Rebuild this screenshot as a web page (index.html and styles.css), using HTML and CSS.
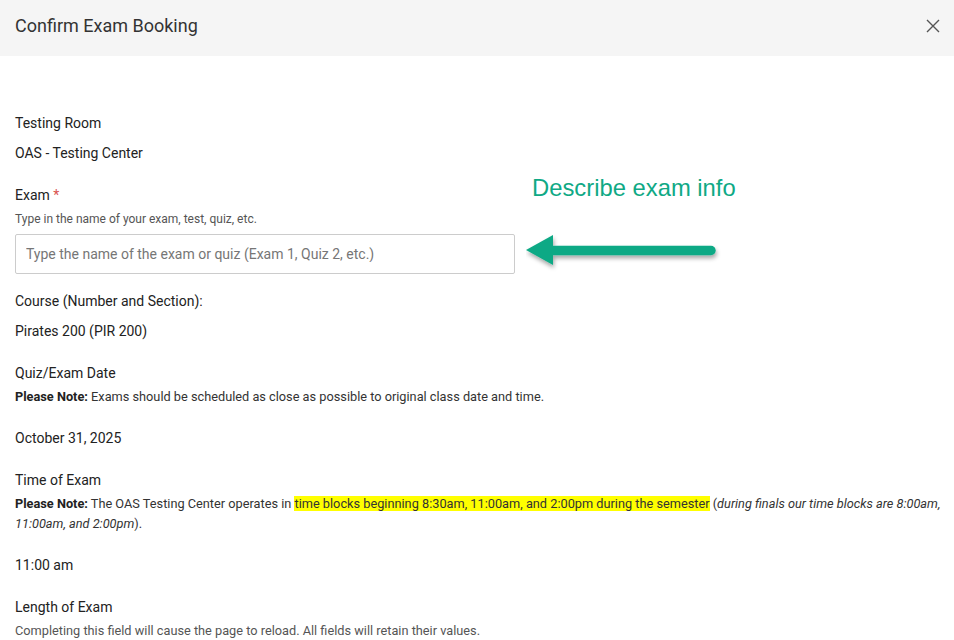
FILE: index.html
```html
<!DOCTYPE html>
<html lang="en">
<head>
    <meta charset="UTF-8">
    <title>Confirm Exam Booking</title>
    <link rel="stylesheet" href="styles.css">
</head>
<body>

    <header class="modal-header">
        <h1>Confirm Exam Booking</h1>
        <button class="close-btn" aria-label="Close">
            <svg width="14" height="14" viewBox="0 0 14 14"><path d="M1 1L13 13M13 1L1 13" stroke="#555" stroke-width="1.4" fill="none"/></svg>
        </button>
    </header>

    <main class="modal-body">
        <!-- 注釈 -->
        <div class="callout">
            <div class="callout-text">Describe exam info</div>
            <svg class="callout-arrow" width="200" height="44" viewBox="0 0 200 44">
                <defs>
                    <filter id="sh" x="-10%" y="-30%" width="130%" height="180%">
                        <feDropShadow dx="1" dy="3" stdDeviation="2" flood-color="#000" flood-opacity="0.35"/>
                    </filter>
                </defs>
                <g filter="url(#sh)">
                    <path d="M26 19.5H185" stroke="#0fa985" stroke-width="9.5" stroke-linecap="round"/>
                    <polygon points="0,19 27,4 27,34" fill="#0fa985"/>
                </g>
            </svg>
        </div>

        <div class="field">
            <div class="label">Testing Room</div>
            <div class="value">OAS - Testing Center</div>
        </div>

        <div class="field field-exam">
            <div class="label">Exam <span class="req">*</span></div>
            <div class="hint">Type in the name of your exam, test, quiz, etc.</div>
            <input class="text-input" type="text" placeholder="Type the name of the exam or quiz (Exam 1, Quiz 2, etc.)">
        </div>

        <div class="field">
            <div class="label">Course (Number and Section):</div>
            <div class="value">Pirates 200 (PIR 200)</div>
        </div>

        <div class="field">
            <div class="label">Quiz/Exam Date</div>
            <div class="hint note"><b>Please Note:</b> Exams should be scheduled as close as possible to original class date and time.</div>
            <div class="value value-far">October 31, 2025</div>
        </div>

        <div class="field">
            <div class="label">Time of Exam</div>
            <div class="hint note"><b>Please Note:</b> The OAS Testing Center operates in <mark>time blocks beginning 8:30am, 11:00am, and 2:00pm during the semester</mark> (<i>during finals our time blocks are 8:00am, 11:00am, and 2:00pm</i>).</div>
            <div class="value value-far">11:00 am</div>
        </div>

        <div class="field">
            <div class="label">Length of Exam</div>
            <div class="hint hint-wide">Completing this field will cause the page to reload. All fields will retain their values.</div>
        </div>
    </main>

</body>
</html>
```

FILE: styles.css
```css
/* --- 基本 --- */
body {
    margin: 0;
    font-family: Roboto, "Liberation Sans", Arial, sans-serif;
    color: #222;
    background: #fff;
}

/* --- ヘッダー --- */
.modal-header {
    height: 56px;
    background-color: #f5f5f5;
    display: flex;
    align-items: center;
    justify-content: space-between;
    padding: 0 14px 0 15px;
}

.modal-header h1 {
    margin: 0;
    font-size: 18px;
    font-weight: 400;
    color: #333;
    position: relative;
    top: -3px;
}

.close-btn {
    border: none;
    background: none;
    padding: 0;
    width: 14px;
    height: 14px;
    position: relative;
    top: -2px;
    cursor: pointer;
}

/* --- 本文 --- */
.modal-body {
    position: relative;
    padding: 57px 8px 0 15px;
}

.field {
    margin-bottom: 22px;
}

.field-exam {
    margin-bottom: 17px;
}

.label,
.value {
    font-size: 14px;
    line-height: 20px;
    color: #222;
}

.value {
    margin-top: 10px;
}

.value-far {
    margin-top: 21px;
}

.req {
    color: #d9534f;
}

.hint {
    font-size: 12px;
    line-height: 20px;
    margin-top: 4px;
    color: #555;
}

.hint-wide,
.note {
    font-size: 12.75px;
}

.note {
    color: #333;
}

.note b {
    color: #222;
}

.note mark {
    background-color: #ffff00;
    color: #333;
}

.text-input {
    display: block;
    box-sizing: border-box;
    margin-top: 5px;
    width: 500px;
    height: 40px;
    padding: 0 10px;
    border: 1px solid #ccc;
    border-radius: 2px;
    font-family: inherit;
    font-size: 14px;
    color: #222;
}

.text-input::placeholder {
    color: #767676;
}

/* --- 注釈（矢印） --- */
.callout {
    position: absolute;
    left: 526px;
    top: 116px;
}

.callout-text {
    font-family: "Liberation Sans", Arial, sans-serif;
    font-size: 23.8px;
    color: #0fa985;
    margin-left: 6px;
    line-height: 32px;
}

.callout-arrow {
    display: block;
    margin-top: 27px;
}
```
